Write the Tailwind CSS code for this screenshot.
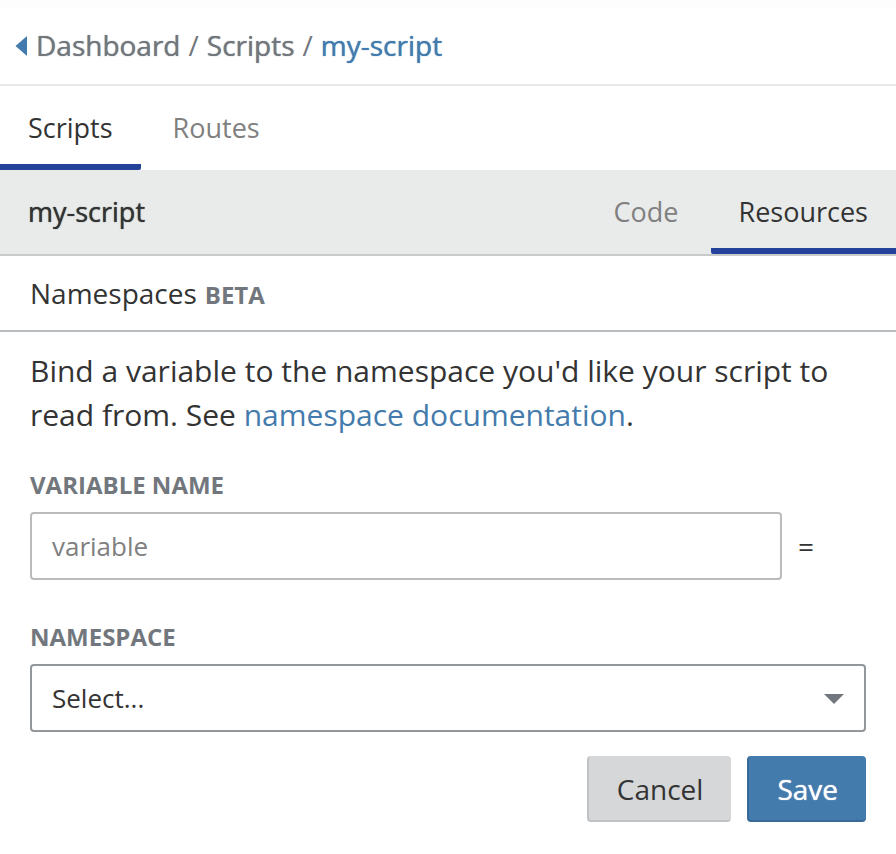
<!DOCTYPE html>
<html lang="en">
<head>
<meta charset="utf-8">
<title>my-script – Resources</title>
<script src="https://cdn.jsdelivr.net/npm/@tailwindcss/browser@4"></script>
</head>
<body class="bg-white font-['Open_Sans',sans-serif] text-[#333333]">
<header class="border-t-8 border-b-2 border-t-[#fdfdfd] border-b-[#e9ebeb]">
  <nav aria-label="Breadcrumb" class="flex h-19 items-center gap-2 px-[15px] pb-0.5 text-[28px] text-[#72777d]">
    <a href="#" class="flex items-center gap-2 [text-shadow:0_0_1px_currentColor]">
      <svg class="mt-0.5 h-5 w-[13px]" viewBox="0 0 13 20" fill="#447bad" aria-hidden="true"><path d="M12 0V20L0.5 10Z"/></svg>
      Dashboard</a>
    <span>/</span>
    <a href="#" class="[text-shadow:0_0_1px_currentColor]">Scripts</a>
    <span>/</span>
    <a href="#" class="text-[#447bad] [text-shadow:0_0_1px_currentColor]">my-script</a>
  </nav>
</header>
<nav aria-label="Sections" class="flex h-21 text-[27px] text-[#808080]">
  <a href="#" class="flex items-center rounded-r-xs border-b-6 border-[#24429a] px-7 pt-1.5 text-[#333333]">Scripts</a>
  <a href="#" class="flex items-center border-b-6 border-transparent px-8 pt-1.5">Routes</a>
</nav>
<div class="flex items-stretch justify-between border-b-2 border-[#c9cbcb] bg-[#e9ebeb] text-[27px]">
  <h1 class="flex h-21 items-center px-7 [text-shadow:0_0_1px_currentColor]">my-script</h1>
  <nav aria-label="Script" class="flex text-[#808080]">
    <a href="#" class="flex items-center border-b-6 border-transparent px-8 pt-1.5">Code</a>
    <a href="#" class="flex items-center rounded-l-xs border-b-6 border-[#24429a] px-7 pt-1.5 text-[#333333]">Resources</a>
  </nav>
</div>
<main>
  <div class="flex h-19 items-center border-b-2 border-[#b7bbbf] px-[30px]">
    <h2 class="flex items-baseline gap-2 text-[28px]">Namespaces <span class="text-[24px] font-bold text-[#72777d]">BETA</span></h2>
  </div>
  <form class="px-[30px] pt-[17px]">
    <p class="text-[30px] leading-[44px]">Bind a variable to the namespace you'd like your script to read from. See <a href="#" class="text-[#447bad]">namespace documentation</a>.</p>
    <label for="variable" class="mt-[29px] block text-[24px] leading-[38px] font-bold text-[#72777d]">VARIABLE NAME</label>
    <div class="mt-2 flex items-center gap-4 pr-[52px]">
      <input id="variable" type="text" placeholder="variable" class="h-17 min-w-0 grow rounded border-2 border-[#bbbbbb] px-5 text-[26px] placeholder:text-[#808080]">
      <span class="text-[28px]">=</span>
    </div>
    <label for="namespace" class="mt-[38px] block text-[24px] leading-[38px] font-bold text-[#72777d]">NAMESPACE</label>
    <div class="relative mt-2">
      <select id="namespace" class="block h-17 w-full appearance-none rounded border-2 border-[#92979b] bg-white px-5 text-[26px]"><option>Select...</option></select>
      <svg class="pointer-events-none absolute top-7 right-5 h-3 w-6" viewBox="0 0 24 12" fill="#72777d" aria-hidden="true"><path d="M2 2H22L12 12Z"/></svg>
    </div>
    <div class="mt-6 flex justify-end gap-4 text-[28px]">
      <button type="button" class="h-[66px] rounded border-b-2 border-l-2 border-[#bfc2c4] bg-[#d5d7d8] px-7 pt-0.5">Cancel</button>
      <button type="submit" class="h-[66px] rounded border-b-2 border-l-2 border-[#386a98] bg-[#447bad] px-7 pt-0.5 text-white [text-shadow:0_0_1px_currentColor]">Save</button>
    </div>
  </form>
</main>
</body>
</html>
